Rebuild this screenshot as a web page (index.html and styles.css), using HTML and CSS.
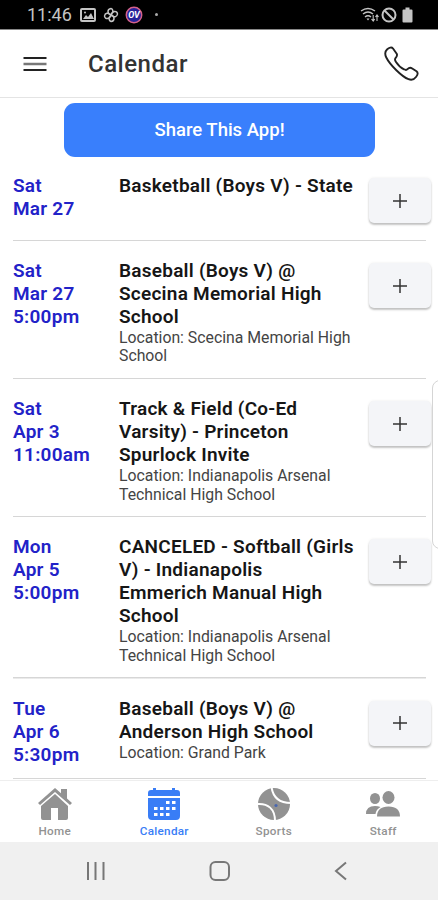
FILE: index.html
```html
<!DOCTYPE html>
<html lang="en">
<head>
    <meta charset="UTF-8">
    <meta name="viewport" content="width=device-width, initial-scale=1.0">
    <title>Calendar</title>
    <link rel="stylesheet" href="styles.css">
</head>
<body>
    <div class="statusbar">
        <span class="time">11:46</span>
        <svg class="status-picture" width="16" height="14" viewBox="0 0 16 14">
            <rect x="1" y="1" width="14" height="12" rx="1" fill="none" stroke="#c4c4c4" stroke-width="2"/>
            <path d="M3 11l3-4 2 2 3-4 3 6z" fill="#c4c4c4"/>
            <circle cx="5" cy="4.5" r="1" fill="#c4c4c4"/>
        </svg>
        <svg class="status-fan" width="16" height="16" viewBox="0 0 16 16" fill="none" stroke="#c4c4c4" stroke-width="1.5">
            <path d="M8 8C4 7 4 2 8 1.500C10 2 11 5 8 8C9 4 14 3 14.500 7C14 10 11 11 8 8C12 9 12 14 8 14.500C6 14 5 11 8 8C7 12 2 13 1.500 9C2 6 5 5 8 8z"/>
        </svg>
        <svg class="status-app" width="18" height="18" viewBox="0 0 18 18">
            <circle cx="9" cy="9" r="7.700" fill="#25229a" stroke="#d5618a" stroke-width="1.500"/>
            <text x="9" y="12" text-anchor="middle" class="app-text">OV</text>
        </svg>
        <span class="dot"></span>
        <svg class="status-wifi" width="19" height="16" viewBox="0 0 19 16" fill="none" stroke="#c4c4c4" stroke-width="1.400">
            <path d="M1 4Q8 -1 15 4M3 7Q8 3 13 7M5 10Q8 7.500 11 10"/>
            <path d="M6.500 11.500h3L8 13.500z" fill="#c4c4c4" stroke="none"/>
            <path d="M13.200 8v6M11.500 12l1.700 2 1.500-2M17 14V8M15.500 10L17 8l1.500 2" stroke-width="1.100"/>
        </svg>
        <svg class="status-block" width="16" height="16" viewBox="0 0 16 16" fill="none" stroke="#c4c4c4" stroke-width="2">
            <circle cx="8" cy="8" r="6.500"/>
            <path d="M3.500 3.500l9 9"/>
        </svg>
        <svg class="status-battery" width="11" height="16" viewBox="0 0 11 16">
            <path d="M3.500 0.500h4v2H9.500q1 0 1 1v11q0 1-1 1h-8q-1 0-1-1v-11q0-1 1-1h2z" fill="#c4c4c4"/>
        </svg>
    </div>

    <header class="toolbar">
        <svg class="menu-icon" width="24" height="16" viewBox="0 0 24 16" stroke="#222" stroke-width="2">
            <path d="M0.500 2h23M0.500 14h23"/>
            <path d="M0.500 8h23" stroke="#777" stroke-width="2.500"/>
        </svg>
        <h1>Calendar</h1>
        <svg class="phone-icon" width="36" height="36" viewBox="0 0 36 36" fill="none" stroke="#222" stroke-width="1.900" stroke-linejoin="round">
            <path d="M3 3.500C5 1.600 7.600 0.800 9 2.500L12.700 7.800C13.700 9.500 12.800 10.700 11.500 12.200C10.700 13.200 11 14.600 12 16C14 19 17 22 20 23.300C21.400 24.100 22.500 24.300 23.500 23.200C25 21.600 26.400 21.300 28.200 22.500L32.500 25.300C34.200 26.700 34 28.600 32 31C30 33.700 27.500 34.400 24.500 33.200C18 30.800 6 19 2.300 11.500C0.700 8.200 0.800 5.600 3 3.500z"/>
        </svg>
    </header>

    <main class="content">
        <button class="share">Share This App!</button>

        <div class="event first">
            <div class="date">Sat<br>Mar 27</div>
            <div class="info">
                <h2>Basketball (Boys V) - State</h2>
            </div>
            <button class="add"><svg width="16" height="16" viewBox="0 0 16 16"><path d="M8 1v14M1 8h14"/></svg></button>
        </div>
        <div class="event">
            <div class="date">Sat<br>Mar 27<br>5:00pm</div>
            <div class="info">
                <h2>Baseball (Boys V) @ Scecina Memorial High School</h2>
                <p>Location: Scecina Memorial High School</p>
            </div>
            <button class="add"><svg width="16" height="16" viewBox="0 0 16 16"><path d="M8 1v14M1 8h14"/></svg></button>
        </div>
        <div class="event">
            <div class="date">Sat<br>Apr 3<br>11:00am</div>
            <div class="info">
                <h2>Track &amp; Field (Co-Ed Varsity) - Princeton Spurlock Invite</h2>
                <p>Location: Indianapolis Arsenal Technical High School</p>
            </div>
            <button class="add"><svg width="16" height="16" viewBox="0 0 16 16"><path d="M8 1v14M1 8h14"/></svg></button>
        </div>
        <div class="event">
            <div class="date">Mon<br>Apr 5<br>5:00pm</div>
            <div class="info">
                <h2>CANCELED - Softball (Girls V) - Indianapolis<br>Emmerich Manual High School</h2>
                <p>Location: Indianapolis Arsenal Technical High School</p>
            </div>
            <button class="add"><svg width="16" height="16" viewBox="0 0 16 16"><path d="M8 1v14M1 8h14"/></svg></button>
        </div>
        <div class="event">
            <div class="date">Tue<br>Apr 6<br>5:30pm</div>
            <div class="info">
                <h2>Baseball (Boys V) @ Anderson High School</h2>
                <p>Location: Grand Park</p>
            </div>
            <button class="add"><svg width="16" height="16" viewBox="0 0 16 16"><path d="M8 1v14M1 8h14"/></svg></button>
        </div>
    </main>

    <nav class="tabs">
        <a class="tab">
            <svg width="36" height="34" viewBox="0 0 36 34" fill="#929292">
                <path d="M18 1L1 16l2 2L18 5l15 13 2-2-5-4.500V2h-6v4.300z"/>
                <path d="M18 7L4 19v12q0 2 2 2h8V21h7v12h8q2 0 2-2V19z"/>
            </svg>
            <span>Home</span>
        </a>
        <a class="tab active">
            <svg width="36" height="34" viewBox="0 0 36 34">
                <path d="M2 9V6q0-3 3-3h2V1h3v2h16V1h3v2h2q3 0 3 3v3zM2 11h32v18q0 4-4 4H6q-4 0-4-4z" fill="#397df6"/>
                <path d="M20 14h3.500v3H20zM26 14h3.500v3H26zM8 20h3.500v3H8zM14 20h3.500v3H14zM20 20h3.500v3H20zM26 20h3.500v3H26zM8 26h3.500v3H8zM14 26h3.500v3H14zM20 26h3.500v3H20z" fill="#fff"/>
            </svg>
            <span>Calendar</span>
        </a>
        <a class="tab">
            <svg width="36" height="34" viewBox="0 0 36 34">
                <circle cx="18" cy="17" r="16" fill="#929292"/>
                <path d="M15.500 0C17 10 23 16 35 16M1 17C12 16 19 22 19 34" fill="none" stroke="#fff" stroke-width="2"/>
                <circle cx="20" cy="18.500" r="1.600" fill="#4967b0"/>
            </svg>
            <span>Sports</span>
        </a>
        <a class="tab">
            <svg width="36" height="34" viewBox="0 0 36 34" fill="#929292">
                <ellipse cx="10" cy="11.500" rx="5" ry="5.500"/>
                <path d="M1 27q0-8 9-8 3 0 5.500 1Q11 22.500 10.500 27z"/>
                <ellipse cx="23.500" cy="10.500" rx="6" ry="6.500"/>
                <path d="M12 29.500q0-10 11.500-10T35 29.500z"/>
            </svg>
            <span>Staff</span>
        </a>
    </nav>

    <div class="navbar">
        <svg width="20" height="20" viewBox="0 0 20 20"><path d="M2 1v18M9.500 1v18M17.500 1v18"/></svg>
        <svg width="22" height="20" viewBox="0 0 22 20"><rect x="1.500" y="1" width="18.500" height="18" rx="5"/></svg>
        <svg width="14" height="20" viewBox="0 0 14 20"><path d="M12 1.500L2 10l10 8.500"/></svg>
    </div>

    <!-- edge panel handle -->
    <div class="edge-handle"></div>
</body>
</html>
```
FILE: styles.css
```css
* {
    box-sizing: border-box;
}
body {
    margin: 0;
    height: 900px;
    display: flex;
    flex-direction: column;
    overflow: hidden;
    position: relative;
    background: #fff;
    font-family: Roboto, sans-serif;
    color: #161616;
}
h1, h2, p {
    margin: 0;
}
svg {
    display: block;
    flex: none;
}

/* Status bar */
.statusbar {
    height: 30px;
    flex: none;
    display: flex;
    align-items: center;
    padding: 0 25px 0 27px;
    background: #000;
    border-bottom: 1px solid #888;
}
.time {
    width: 53px;
    font-size: 18px;
    color: #c4c4c4;
    white-space: nowrap;
}
.status-fan {
    margin-left: 7px;
}
.status-app {
    margin-left: 6px;
}
.app-text {
    font-size: 9px;
    font-weight: bold;
    font-style: italic;
    fill: #fff;
}
.dot {
    width: 3px;
    height: 3px;
    margin-left: 12px;
    border-radius: 50%;
    background: #aaa;
}
.status-wifi {
    margin-left: auto;
}
.status-block {
    margin-left: 2px;
}
.status-battery {
    margin-left: 5px;
}

/* Header */
.toolbar {
    height: 68px;
    flex: none;
    display: flex;
    align-items: center;
    padding: 1px 18px 0 23px;
    border-bottom: 1px solid #e4e4e4;
}
.toolbar h1 {
    margin-left: 41px;
    font-size: 24px;
    font-weight: 500;
    letter-spacing: 0.5px;
    color: #333;
}
.phone-icon {
    margin-left: auto;
}

/* Events */
.content {
    height: 682px;
    flex: none;
    display: flex;
    flex-direction: column;
}
.share {
    width: 311px;
    height: 54px;
    flex: none;
    margin: 5px 0 0 64px;
    padding: 0 0 1px;
    border: none;
    border-radius: 11px;
    background: #397ffc;
    color: #fff;
    font: 500 18.5px Roboto, sans-serif;
}
.event {
    flex: none;
    display: grid;
    grid-template-columns: 106px 250px 62px;
    align-items: start;
    padding: 18px 6px 13.4px 13px;
    background: linear-gradient(#d6d6d6, #d6d6d6) 13px 100% / 413px 1.5px no-repeat;
}
.event.first {
    min-height: 84px;
    padding-top: 17px;
}
.info {
    width: 238px;
}
.date, .event h2 {
    font-size: 19px;
    line-height: 23px;
    font-weight: 600;
    letter-spacing: 0.24px;
}
.date {
    color: #2222c8;
}
.event p {
    margin-top: 1px;
    font-size: 15.8px;
    line-height: 18.4px;
    color: #444;
}
.add {
    width: 62px;
    height: 45px;
    margin-top: 4px;
    padding: 0;
    display: flex;
    align-items: center;
    justify-content: center;
    border: none;
    border-radius: 5px;
    background: #f4f5f8;
    box-shadow: 0 2px 2px rgba(0, 0, 0, 0.22), 0 0 3px rgba(0, 0, 0, 0.08);
}
.add path {
    stroke: #333;
    stroke-width: 1.5;
}

/* Bottom tabs */
.tabs {
    height: 62px;
    flex: none;
    display: flex;
    border-top: 1px solid #eee;
}
.tab {
    flex: 1;
    display: flex;
    flex-direction: column;
    align-items: center;
    padding-top: 6px;
    font-size: 11.7px;
    font-weight: 500;
    line-height: 14px;
    letter-spacing: 0.3px;
    color: #929292;
}
.tab span {
    margin-top: 3px;
}
.tab.active {
    color: #397df6;
}

/* System navigation */
.navbar {
    flex: 1;
    display: flex;
    align-items: center;
    padding: 0 90px 0 86px;
    justify-content: space-between;
    background: #f0f0f0;
}
.navbar svg {
    fill: none;
    stroke: #777;
    stroke-width: 2;
}
.edge-handle {
    position: absolute;
    top: 380px;
    right: -12px;
    width: 18px;
    height: 169px;
    border: 1.5px solid #d5d5d5;
    border-radius: 8px;
    background: #fff;
}
```
